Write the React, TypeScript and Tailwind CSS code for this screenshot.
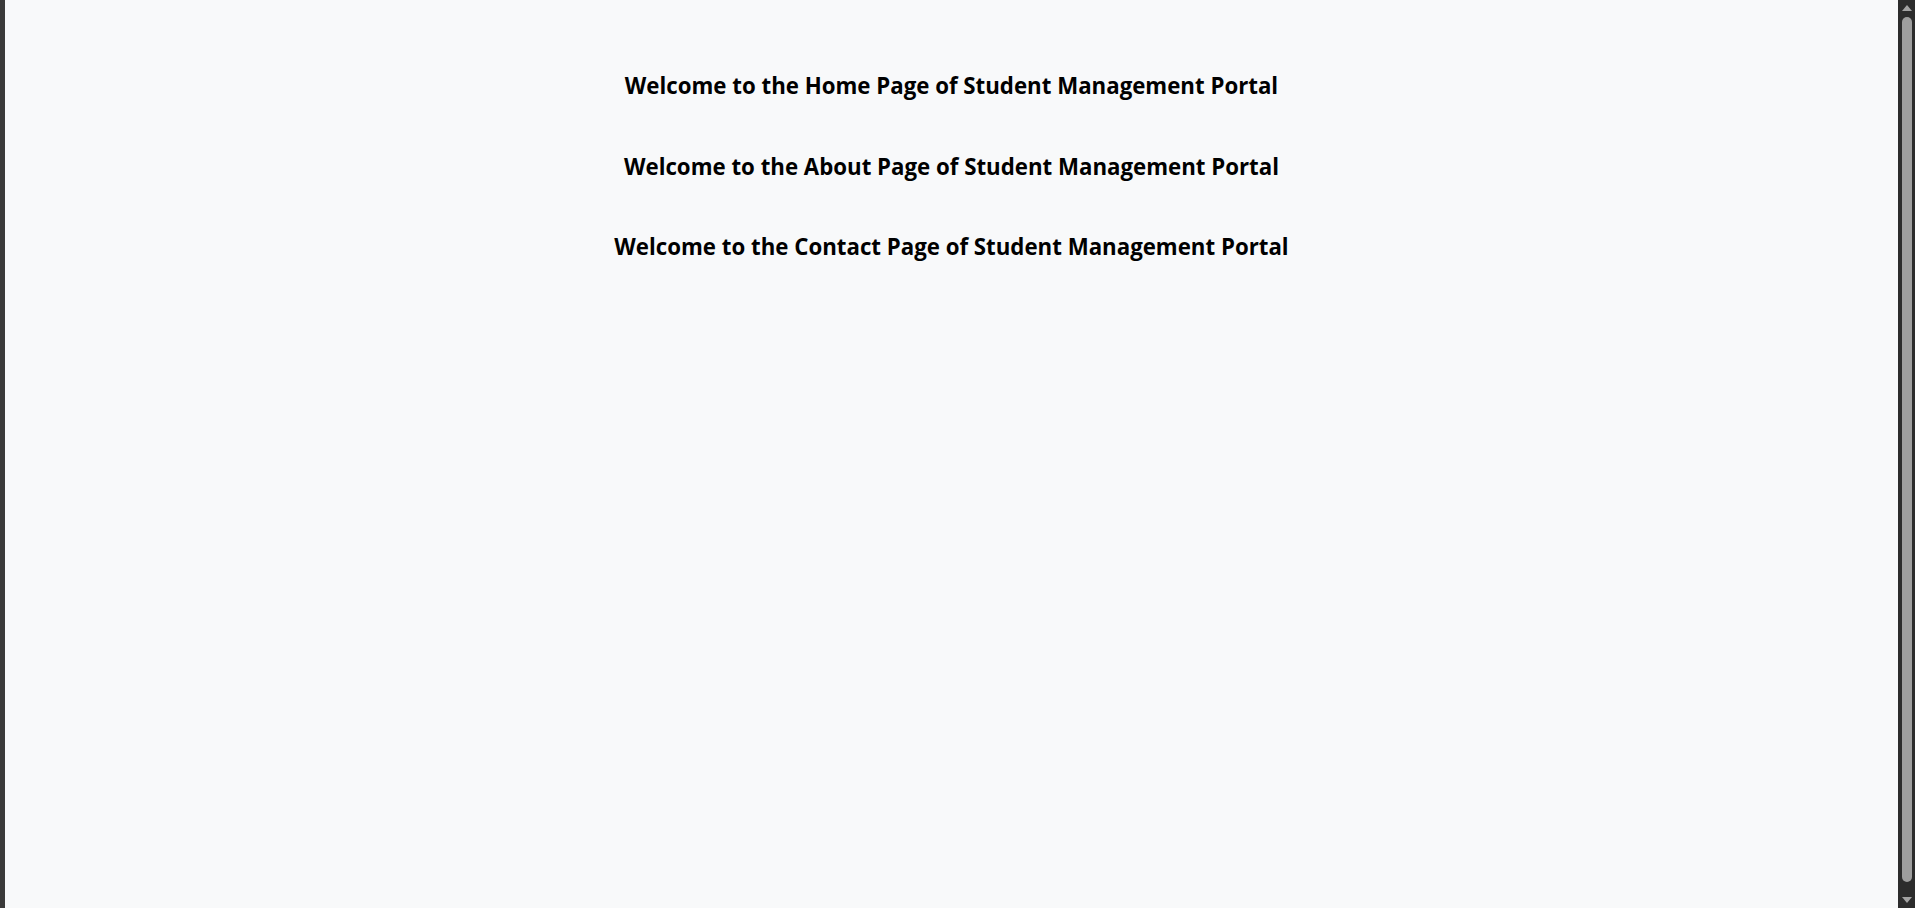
export default function App() {
  const lines = [
    "Welcome to the Home Page of Student Management Portal",
    "Welcome to the About Page of Student Management Portal",
    "Welcome to the Contact Page of Student Management Portal",
  ];
  return (
    <div className="flex h-[908px] w-[1915px] overflow-hidden bg-[#f8f9fa]">
      <div className="w-[5px] shrink-0 bg-[#3a3a3a]" />
      <main className="flex flex-1 flex-col items-center pt-[70px] font-['Open_Sans',sans-serif]">
        {lines.map((t) => (
          <h2 key={t} className="h-[80.5px] text-[22.25px] font-bold leading-[32px] text-black">
            {t}
          </h2>
        ))}
      </main>
      <div className="flex w-[17px] shrink-0 flex-col items-center bg-[#2c2c2c] py-[4px]">
        <svg width="12" height="8" viewBox="0 0 12 8" className="shrink-0">
          <polygon points="6,1 11,7 1,7" fill="#a3a3a3" />
        </svg>
        <div className="mt-[5px] w-[10px] flex-1 rounded-[5px] bg-[#9e9e9e]" />
        <div className="h-[14px]" />
        <svg width="12" height="8" viewBox="0 0 12 8" className="shrink-0">
          <polygon points="1,1 11,1 6,7" fill="#a3a3a3" />
        </svg>
      </div>
    </div>
  );
}
